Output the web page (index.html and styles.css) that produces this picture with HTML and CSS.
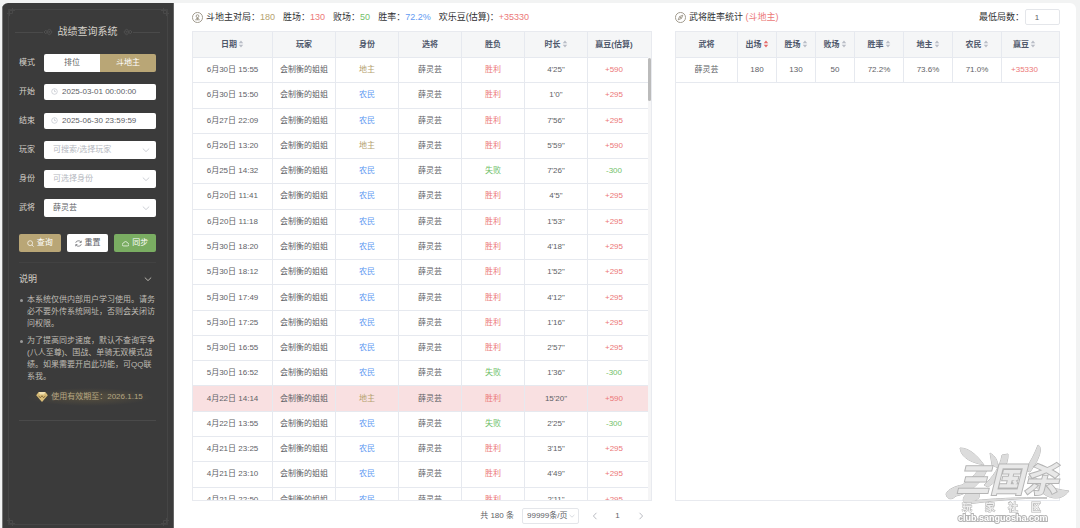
FILE: index.html
```html
<!DOCTYPE html>
<html lang="zh-CN">
	<head>
		<meta charset="UTF-8" />
		<meta name="viewport" content="width=device-width, initial-scale=1.0" />
		<title>战绩查询系统</title>
		<link rel="stylesheet" href="styles.css">
	</head>
	<body>
		<svg class="defs" aria-hidden="true">
			<symbol id="chevron" viewBox="0 0 10 10"><path d="M1 3.2 5 7l4-3.8" /></symbol>
			<symbol id="clock" viewBox="0 0 10 10"><circle cx="5" cy="5" r="4" /><path d="M5 2.5V5.2h2" /></symbol>
			<symbol id="sort" viewBox="0 0 6 10"><path class="up" d="M3 .6 5.8 4.2H.2z" /><path class="down" d="M3 9.4 .2 5.8h5.6z" /></symbol>
			<symbol id="corner" viewBox="0 0 8 8"><path d="M2.500 8V2.500H8M0 5.500h5.500V0" /></symbol>
			<symbol id="knot" viewBox="0 0 10 8"><path d="M0 4l2-2 2 2-2 2zM3 4l3-3.5L9 4 6 7.5zM5 4l1-1 1 1-1 1z" /></symbol>
		</svg>
		<div class="app">
			<aside class="sidebar">
				<svg class="corner top left"><use href="#corner" /></svg>
				<svg class="corner top right"><use href="#corner" /></svg>
				<svg class="corner bottom left"><use href="#corner" /></svg>
				<svg class="corner bottom right"><use href="#corner" /></svg>
				<h1><svg class="knot"><use href="#knot" /></svg><span>战绩查询系统</span><svg class="knot flip"><use href="#knot" /></svg></h1>
				<form>
					<div class="field">
						<span class="label">模式</span>
						<div class="control modes">
							<button type="button">排位</button>
							<button type="button" class="active">斗地主</button>
						</div>
					</div>
					<div class="field">
						<label for="start">开始</label>
						<div class="control date"><svg><use href="#clock" /></svg><input id="start" type="text" value="2025-03-01 00:00:00" /></div>
					</div>
					<div class="field">
						<label for="end">结束</label>
						<div class="control date"><svg><use href="#clock" /></svg><input id="end" type="text" value="2025-06-30 23:59:59" /></div>
					</div>
					<div class="field">
						<label for="player">玩家</label>
						<div class="control"><select id="player" class="empty"><option>可搜索/选择玩家</option></select><svg><use href="#chevron" /></svg></div>
					</div>
					<div class="field">
						<label for="role">身份</label>
						<div class="control"><select id="role" class="empty"><option>可选择身份</option><option>地主</option><option>农民</option></select><svg><use href="#chevron" /></svg></div>
					</div>
					<div class="field">
						<label for="hero">武将</label>
						<div class="control"><select id="hero"><option>薛灵芸</option></select><svg><use href="#chevron" /></svg></div>
					</div>
					<div class="actions">
						<button type="button" class="gold"><svg viewBox="0 0 10 10"><circle cx="4.500" cy="4.500" r="3.500" /><path d="M7 7l2.500 2.500" /></svg>查询</button>
						<button type="button"><svg viewBox="0 0 10 10"><path d="M1 4a4 3.500 0 0 1 7.500-1M9 1v2.500H6.500M9 6a4 3.500 0 0 1-7.500 1M1 9V6.500h2.500" /></svg>重置</button>
						<button type="button" class="green"><svg viewBox="0 0 10 10"><path d="M2.500 8.500a2 2 0 0 1-.3-4 3 3 0 0 1 5.800 0 2 2 0 0 1-.3 4z" /></svg>同步</button>
					</div>
				</form>
				<section class="notes">
					<h2>说明<svg><use href="#chevron" /></svg></h2>
					<ul>
						<li>本系统仅供内部用户学习使用。请务必不要外传系统网址，否则会关闭访问权限。</li>
						<li>为了提高同步速度，默认不查询军争(八人至尊)、国战、单骑无双模式战绩。如果需要开启此功能，可QQ联系我。</li>
					</ul>
					<p class="expiry">
						<svg viewBox="0 0 14 12"><path fill="#d9bd78" d="M3 0h8l3 4-7 8-7-8z" /><path fill="#f2e2b2" d="M3 0h8L9.500 3h-5z" /><path fill="none" stroke="#7a6234" d="M3 4.500l2 2.500 2-2.500 2 2.500 2-2.500" /></svg>
						使用有效期至：2026.1.15
					</p>
				</section>
			</aside>
			<main>
				<section class="panel">
					<header>
						<svg class="mark" viewBox="0 0 12 12"><circle cx="6" cy="6" r="5.500" /><circle cx="6" cy="4.500" r="1.500" /><path d="M3.500 8.500h5M4.500 7h3M6 6v2.500" /></svg>
						<span>斗地主对局：<b class="gold-text">180</b></span>
						<span>胜场：<b class="red">130</b></span>
						<span>败场：<b class="green-text">50</b></span>
						<span>胜率：<b class="blue">72.2%</b></span>
						<span>欢乐豆(估算)：<b class="red">+35330</b></span>
					</header>
					<div class="table-box">
						<table class="records">
							<colgroup><col class="when" /><col span="5" class="mid" /><col /></colgroup>
							<thead>
								<tr><th>日期<svg class="sort"><use href="#sort" /></svg></th><th>玩家</th><th>身份</th><th>选将</th><th>胜负</th><th>时长<svg class="sort"><use href="#sort" /></svg></th><th>赢豆(估算)</th></tr>
							</thead>
							<tbody>
								<tr><td>6月30日 15:55</td><td>会制衡的姐姐</td><td class="gold-text">地主</td><td>薛灵芸</td><td class="red">胜利</td><td>4'25"</td><td class="red">+590</td></tr>
								<tr><td>6月30日 15:50</td><td>会制衡的姐姐</td><td class="blue">农民</td><td>薛灵芸</td><td class="red">胜利</td><td>1'0"</td><td class="red">+295</td></tr>
								<tr><td>6月27日 22:09</td><td>会制衡的姐姐</td><td class="blue">农民</td><td>薛灵芸</td><td class="red">胜利</td><td>7'56"</td><td class="red">+295</td></tr>
								<tr><td>6月26日 13:20</td><td>会制衡的姐姐</td><td class="gold-text">地主</td><td>薛灵芸</td><td class="red">胜利</td><td>5'59"</td><td class="red">+590</td></tr>
								<tr><td>6月25日 14:32</td><td>会制衡的姐姐</td><td class="blue">农民</td><td>薛灵芸</td><td class="green-text">失败</td><td>7'26"</td><td class="green-text">-300</td></tr>
								<tr><td>6月20日 11:41</td><td>会制衡的姐姐</td><td class="blue">农民</td><td>薛灵芸</td><td class="red">胜利</td><td>4'5"</td><td class="red">+295</td></tr>
								<tr><td>6月20日 11:18</td><td>会制衡的姐姐</td><td class="blue">农民</td><td>薛灵芸</td><td class="red">胜利</td><td>1'53"</td><td class="red">+295</td></tr>
								<tr><td>5月30日 18:20</td><td>会制衡的姐姐</td><td class="blue">农民</td><td>薛灵芸</td><td class="red">胜利</td><td>4'18"</td><td class="red">+295</td></tr>
								<tr><td>5月30日 18:12</td><td>会制衡的姐姐</td><td class="blue">农民</td><td>薛灵芸</td><td class="red">胜利</td><td>1'52"</td><td class="red">+295</td></tr>
								<tr><td>5月30日 17:49</td><td>会制衡的姐姐</td><td class="blue">农民</td><td>薛灵芸</td><td class="red">胜利</td><td>4'12"</td><td class="red">+295</td></tr>
								<tr><td>5月30日 17:25</td><td>会制衡的姐姐</td><td class="blue">农民</td><td>薛灵芸</td><td class="red">胜利</td><td>1'16"</td><td class="red">+295</td></tr>
								<tr><td>5月30日 16:55</td><td>会制衡的姐姐</td><td class="blue">农民</td><td>薛灵芸</td><td class="red">胜利</td><td>2'57"</td><td class="red">+295</td></tr>
								<tr><td>5月30日 16:52</td><td>会制衡的姐姐</td><td class="blue">农民</td><td>薛灵芸</td><td class="green-text">失败</td><td>1'36"</td><td class="green-text">-300</td></tr>
								<tr class="long"><td>4月22日 14:14</td><td>会制衡的姐姐</td><td class="gold-text">地主</td><td>薛灵芸</td><td class="red">胜利</td><td>15'20"</td><td class="red">+590</td></tr>
								<tr><td>4月22日 13:55</td><td>会制衡的姐姐</td><td class="blue">农民</td><td>薛灵芸</td><td class="green-text">失败</td><td>2'25"</td><td class="green-text">-300</td></tr>
								<tr><td>4月21日 23:25</td><td>会制衡的姐姐</td><td class="blue">农民</td><td>薛灵芸</td><td class="red">胜利</td><td>3'15"</td><td class="red">+295</td></tr>
								<tr><td>4月21日 23:10</td><td>会制衡的姐姐</td><td class="blue">农民</td><td>薛灵芸</td><td class="red">胜利</td><td>4'49"</td><td class="red">+295</td></tr>
								<tr><td>4月21日 22:50</td><td>会制衡的姐姐</td><td class="blue">农民</td><td>薛灵芸</td><td class="red">胜利</td><td>2'11"</td><td class="red">+295</td></tr>
							</tbody>
						</table>
						<div class="scrollbar"></div>
					</div>
					<footer>
						<span>共 180 条</span>
						<div class="control page-size"><select aria-label="每页条数"><option>99999条/页</option></select><svg><use href="#chevron" /></svg></div>
						<button type="button" aria-label="上一页"><svg class="prev"><use href="#chevron" /></svg></button>
						<button type="button">1</button>
						<button type="button" aria-label="下一页"><svg class="next"><use href="#chevron" /></svg></button>
					</footer>
				</section>
				<section class="panel">
					<header>
						<svg class="mark" viewBox="0 0 12 12"><circle cx="6" cy="6" r="5.500" /><path d="M8.500 3.500 7 7 3.500 8.500 5 5zM5 5l2 2" /></svg>
						<span>武将胜率统计 <b class="red">(斗地主)</b></span>
						<label class="minimum" for="minimum">最低局数：</label>
						<input id="minimum" type="text" value="1" />
					</header>
					<div class="table-box">
						<table class="stats">
							<colgroup><col class="name" /><col span="3" class="count" /><col span="3" class="rate" /><col /></colgroup>
							<thead>
								<tr><th>武将</th><th>出场<svg class="sort desc"><use href="#sort" /></svg></th><th>胜场<svg class="sort"><use href="#sort" /></svg></th><th>败场<svg class="sort"><use href="#sort" /></svg></th><th>胜率<svg class="sort"><use href="#sort" /></svg></th><th>地主<svg class="sort"><use href="#sort" /></svg></th><th>农民<svg class="sort"><use href="#sort" /></svg></th><th>赢豆<svg class="sort"><use href="#sort" /></svg></th></tr>
							</thead>
							<tbody>
								<tr><td>薛灵芸</td><td>180</td><td>130</td><td>50</td><td>72.2%</td><td>73.6%</td><td>71.0%</td><td class="red">+35330</td></tr>
							</tbody>
						</table>
					</div>
					<footer></footer>
				</section>
			</main>
		</div>
		<svg class="watermark" viewBox="0 0 126 80">
			<g class="brush">
				<path d="M16 4c9 0 17 7 24 17-10-2-23-6-24-17z" />
				<path d="M2 50c2-5 10-8 16-9 8-5 14-11 18-18l7 3C37 40 24 50 12 52c-4 4-9 4-10-2z" />
				<path d="M46 9c5 3 8 7 8 15l-6-3z" />
				<path d="M64 10c1 9-7 25-20 33l-4-2c9-8 16-18 18-30z" />
				<path d="M94 1c5 2 2 14-8 27l-5-2c6-9 10-17 13-25z" />
				<path d="M88 30c9 10 19 15 37 17-5 7-13 9-22 5-9-5-14-12-19-19z" />
				<path d="M20 53c2-5 11-7 15-3 2 4-3 7-8 7 16-2 50-4 76-3-30 0-56 3-79 6-4-1-6-3-4-7z" />
			</g>
			<text class="brand" x="12" y="48">三国杀</text>
			<text class="community" x="18 41 64 87" y="67">玩家社区</text>
			<text class="site" x="14" y="77">club.sanguosha.com</text>
		</svg>
	</body>
</html>
```
FILE: styles.css
```css
* {
	box-sizing: border-box;
}
body {
	margin: 0;
	padding: 3px 4px 0 2px;
	background-color: #f2f3f3;
	color: #606266;
	font-family: "Liberation Sans", "Noto Sans CJK SC", sans-serif;
	font-size: 8px;
	line-height: 12px;
}
h1, h2, p, ul {
	margin: 0;
	padding: 0;
}
button, input, select {
	margin: 0;
	padding: 0;
	border: none;
	border-radius: 2px;
	background-color: #fff;
	color: #606266;
	font: inherit;
}
button {
	cursor: pointer;
}
svg {
	flex: none;
	width: 8px;
	height: 8px;
	fill: none;
	stroke: currentColor;
}
.defs {
	position: absolute;
	width: 0;
	height: 0;
}
.app {
	display: grid;
	grid-template-columns: 172px 1fr;
	height: calc(100vh - 3px);
	overflow: hidden;
	border-radius: 6px 6px 0 0;
	background-color: #fff;
}

/* sidebar */
.sidebar {
	position: relative;
	padding: 20px 17px 0 16px;
	border-left: 1px solid #777;
	border-right: 1px solid #666;
	background-color: #3b3b3b;
	color: #d6d2ca;
}
.sidebar::before {
	content: "";
	position: absolute;
	inset: 6px 5px 3px;
	border: 1px solid #454545;
	pointer-events: none;
}
.corner {
	position: absolute;
	color: #494949;
}
.top {
	top: 5px;
}
.bottom {
	bottom: 2px;
}
.left {
	left: 4px;
}
.right {
	right: 4px;
	transform: scaleX(-1);
}
.bottom.left {
	transform: scaleY(-1);
}
.bottom.right {
	transform: scale(-1);
}
h1 {
	display: flex;
	align-items: center;
	gap: 5px;
	height: 18px;
	font-size: 10px;
	font-weight: normal;
}
h1::before, h1::after {
	content: "";
	flex: 1;
	height: 1px;
	margin: 0 -4px;
	background-color: #4a4a4a;
}
h1 .knot {
	width: 9px;
	color: #525252;
}
.flip {
	transform: scaleX(-1);
}
form {
	padding: 7px 0 10px;
	border-bottom: 1px solid #424242;
}
.field {
	display: flex;
	align-items: center;
	height: 29px;
}
.field label, .label {
	width: 25px;
}
.control {
	position: relative;
	display: flex;
	align-items: center;
	flex: 1;
	color: #c0c4cc;
}
.control svg {
	position: absolute;
	right: 6px;
	pointer-events: none;
}
.control select, .control input {
	appearance: none;
	width: 100%;
	height: 18px;
	padding: 0 16px 0 9px;
}
.control .empty {
	color: #b4b7be;
}
.control.date input {
	height: 16px;
	padding: 0 4px 0 18px;
}
.control.date svg {
	left: 7px;
	width: 7px;
	height: 7px;
}
.modes button {
	flex: 1;
	height: 18px;
	border-radius: 2px 0 0 2px;
}
.modes .active {
	border-radius: 0 2px 2px 0;
	background-color: #b9a676;
	color: #fff;
}
.actions {
	display: flex;
	gap: 6px;
	padding-top: 12px;
}
.actions button {
	display: flex;
	flex: 1;
	justify-content: center;
	align-items: center;
	gap: 3px;
	height: 18px;
}
.actions svg {
	width: 7px;
	height: 7px;
}
.actions .gold {
	background-color: #b9a676;
	color: #fff;
}
.actions .green {
	background-color: #7aad62;
	color: #fff;
}
.notes {
	padding-bottom: 14px;
	border-bottom: 1px solid #4a4a4a;
}
h2 {
	display: flex;
	justify-content: space-between;
	align-items: center;
	height: 31px;
	padding-right: 4px;
	font-size: 9px;
	font-weight: normal;
}
ul {
	list-style: none;
}
li {
	position: relative;
	margin-bottom: 5px;
	padding-left: 8px;
	color: #bfbbb4;
}
li::before {
	content: "";
	position: absolute;
	top: 5px;
	left: 1px;
	width: 3px;
	height: 3px;
	border-radius: 50%;
	background-color: #999;
}
.expiry {
	display: flex;
	justify-content: center;
	align-items: center;
	gap: 3px;
	height: 18px;
	margin: 0 4px 0 8px;
	background: radial-gradient(closest-side, #57503f, #3b3b3b);
	color: #b5a683;
}
.expiry svg {
	width: 12px;
	height: 10px;
	stroke: none;
}

/* content */
main {
	display: grid;
	grid-template-columns: 460fr 385fr;
	gap: 23px;
	min-height: 0;
	padding: 0 16px 0 18px;
}
.panel {
	display: flex;
	flex-direction: column;
	min-width: 0;
	min-height: 0;
}
header {
	display: flex;
	align-items: center;
	gap: 8px;
	height: 28px;
	color: #303133;
	font-size: 9px;
	white-space: nowrap;
}
header b {
	font-weight: normal;
}
.mark {
	width: 11px;
	height: 11px;
	margin-right: -5px;
	color: #9a9486;
}
.minimum {
	margin-left: auto;
}
header input {
	width: 35px;
	height: 16px;
	margin-left: -7px;
	padding-right: 11px;
	border: 1px solid #e4e6ea;
	color: #606266;
	font-size: 8px;
	text-align: center;
}
.table-box {
	position: relative;
	flex: 1;
	min-height: 0;
	overflow: hidden;
	border: 1px solid #e8eaef;
}
table {
	width: 100%;
	border-spacing: 0;
	table-layout: fixed;
	text-align: center;
	white-space: nowrap;
}
th, td {
	padding: 0;
	border-right: 1px solid #e6e9ef;
	border-bottom: 1px solid #e6e9ef;
}
th:last-child, td:last-child {
	border-right: none;
}
th {
	height: 26px;
	background-color: #f5f6f7;
	color: #4f586b;
}
td {
	height: 25px;
}
.records {
	width: calc(100% - 3px);
	height: 481px;
}
.when {
	width: 80px;
}
.mid {
	width: 63px;
}
.name {
	width: 62px;
}
.count {
	width: 39px;
}
.rate {
	width: 49px;
}
.records th:last-child, .records td:last-child {
	padding-right: 8px;
}
.stats th:last-child, .stats td:last-child {
	padding-right: 12px;
}
.long td {
	background-color: #f9e0e1;
}
.sort {
	width: 6px;
	height: 8px;
	margin-left: 1px;
	fill: #b9bdc6;
	stroke: none;
	vertical-align: -1px;
}
.desc {
	fill: #e66a6a;
}
.scrollbar {
	position: absolute;
	top: 0;
	right: 0;
	bottom: 0;
	width: 3px;
	border-top: 26px solid #f5f6f7;
	background-color: #f5f5f6;
}
.scrollbar::before {
	content: "";
	display: block;
	height: 43px;
	border-radius: 2px;
	background-color: #bbb;
}
.gold-text {
	color: #b5a270;
}
.red {
	color: #ec7878;
}
.green-text {
	color: #73bf6b;
}
.blue {
	color: #639bf2;
}
footer {
	display: flex;
	justify-content: flex-end;
	align-items: center;
	gap: 8px;
	height: 27px;
	padding: 3px 4px 0 0;
}
footer .control {
	flex: none;
	width: 57px;
}
footer .control svg {
	right: 4px;
	width: 6px;
	height: 6px;
}
footer select {
	border: 1px solid #e4e6ea;
}
footer .control select {
	height: 16px;
	padding: 0 10px 0 4px;
}
footer button {
	width: 15px;
	height: 16px;
	line-height: 16px;
}
footer button svg {
	color: #a8abb2;
	vertical-align: middle;
}
.prev {
	transform: rotate(90deg);
}
.next {
	transform: rotate(-90deg);
}

/* community logo */
.watermark {
	position: fixed;
	right: 10px;
	bottom: 4px;
	width: 126px;
	height: 80px;
	pointer-events: none;
	paint-order: stroke;
	stroke: #b4b4b4;
	stroke-width: 1;
	fill: #dcdcdc;
}
.brand {
	font-size: 34px;
	font-weight: bold;
	font-style: italic;
	stroke-width: 2;
	fill: #e8e8e8;
}
.community {
	font-size: 10px;
	font-weight: bold;
	fill: #eee;
}
.site {
	font-size: 9px;
	font-weight: bold;
	stroke-width: 2;
	fill: #fff;
}
```
